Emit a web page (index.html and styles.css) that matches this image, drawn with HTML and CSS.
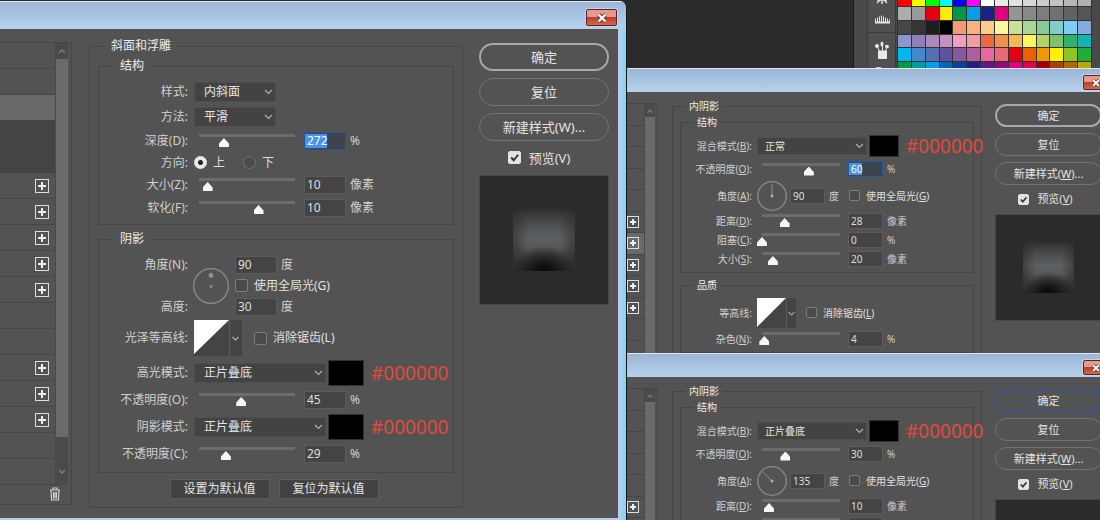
FILE: index.html
```html
<!DOCTYPE html>
<html lang="zh-CN">
<head>
<meta charset="utf-8">
<title>图层样式</title>
<link rel="stylesheet" href="styles.css">
</head>
<body>
<main class="desktop">

  <aside class="dock">
    <div class="dock-strip"></div>
    <div class="dock-icons">
      <svg class="dock-icon" width="27" height="69" viewBox="0 0 27 69" aria-hidden="true">
        <path d="M14 -4V4M9 3l3-3M19 3l-3-3M9 0h10" stroke="#ddd" stroke-width="1.500" fill="none"/>
        <path d="M7 23.500v-5h1v3h1v-4h1v4h1v-5h1v5h1v-6h1v6h1v-5h1v5h1v-4h1v4h1v-3h1v3h1v-2h1v4z" fill="#e4e4e4"/>
        <path d="M0 32.500h27" stroke="#3c3c3c"/>
        <path d="M10.500 51h8v7.500h-8zM11.500 51l-2-4M14.500 51v-5M17.500 51l1.500-4" fill="#e8e8e8" stroke="#e8e8e8"/>
        <ellipse cx="9" cy="46" rx="2" ry="2" fill="#e8e8e8"/>
        <ellipse cx="14" cy="44" rx="1.500" ry="2.500" fill="#e8e8e8"/>
        <ellipse cx="19" cy="46.500" rx="2" ry="1.800" fill="#e8e8e8"/>
        <path d="M8 67h5v2H8z" fill="#ccc"/>
      </svg>
    </div>
    <div class="swatches" id="swatches"></div>
  </aside>

  <section class="dialog dialog-main" aria-label="图层样式">
    <header class="titlebar">
      <button class="close" aria-label="关闭"><svg viewBox="0 0 12 10" width="12" height="10"><path d="M2.500 1.500l7 7M9.500 1.500l-7 7" stroke="#5a3538" stroke-width="4"/><path d="M2.500 1.500l7 7M9.500 1.500l-7 7" stroke="#fff" stroke-width="2.400"/></svg></button>
    </header>
    <div class="client">
      <nav class="effects">
        <div class="effects-body">
          <ul class="effect-list">
            <li></li><li></li><li class="selected"></li><li class="sub"></li><li class="sub"></li>
            <li><button class="plus" aria-label="添加"></button></li>
            <li><button class="plus" aria-label="添加"></button></li>
            <li><button class="plus" aria-label="添加"></button></li>
            <li><button class="plus" aria-label="添加"></button></li>
            <li><button class="plus" aria-label="添加"></button></li>
            <li></li><li></li>
            <li><button class="plus" aria-label="添加"></button></li>
            <li><button class="plus" aria-label="添加"></button></li>
            <li><button class="plus" aria-label="添加"></button></li>
            <li></li><li></li>
          </ul>
          <div class="scroll">
            <svg width="12" height="16" viewBox="0 0 12 16"><path d="M3 10l3-3 3 3" fill="none" stroke="#808080" stroke-width="1.300"/></svg>
            <span class="thumb"></span>
            <svg width="12" height="48" viewBox="0 0 12 48"><path d="M3 33l3 3 3-3" fill="none" stroke="#808080" stroke-width="1.300"/></svg>
          </div>
        </div>
        <button class="trash" aria-label="删除"><svg width="12" height="14" viewBox="0 0 12 14" fill="none" stroke="#d0d0d0" stroke-width="1.200"><path d="M1 3h10M4 3V1h4v2M2 3.500l.6 9.500h6.800l.6-9.500M4.500 5v6.500M6 5v6.500M7.500 5v6.500"/></svg></button>
      </nav>

      <fieldset class="group group-outer">
        <legend>斜面和浮雕</legend>
        <fieldset class="group">
          <legend>结构</legend>
          <div class="row row-select">
            <label class="name" for="a1">样式:</label>
            <select id="a1" class="short"><option>内斜面</option></select>
          </div>
          <div class="row row-select">
            <label class="name" for="a2">方法:</label>
            <select id="a2" class="short"><option>平滑</option></select>
          </div>
          <div class="row">
            <label class="name" for="a3">深度(D):</label>
            <input type="range" value="26" aria-label="深度">
            <input type="text" id="a3" class="picked" value="272"><span class="unit">%</span>
          </div>
          <div class="row row-radio">
            <span class="name">方向:</span>
            <label class="radio"><input type="radio" name="dir" checked>上</label>
            <label class="radio"><input type="radio" name="dir">下</label>
          </div>
          <div class="row">
            <label class="name" for="a4">大小(Z):</label>
            <input type="range" value="9" aria-label="大小">
            <input type="text" id="a4" value="10"><span class="unit">像素</span>
          </div>
          <div class="row">
            <label class="name" for="a5">软化(F):</label>
            <input type="range" value="62" aria-label="软化">
            <input type="text" id="a5" value="10"><span class="unit">像素</span>
          </div>
        </fieldset>
        <fieldset class="group">
          <legend>阴影</legend>
          <div class="light">
            <label class="name" for="b1">角度(N):</label>
            <svg class="dial" viewBox="0 0 36 36"><circle cx="18" cy="18" r="17.300" fill="none" stroke="#8c8c8c" stroke-width="1.300"/><circle cx="18" cy="7.500" r="2.400" fill="#929292"/><circle cx="18" cy="18.500" r="1.400" fill="#929292"/></svg>
            <div class="cell"><input type="text" id="b1" value="90"><span class="unit">度</span></div>
            <label class="check cell"><input type="checkbox"><span>使用全局光(G)</span></label>
            <label class="name last" for="b2">高度:</label>
            <div class="cell"><input type="text" id="b2" value="30"><span class="unit">度</span></div>
          </div>
          <div class="row row-contour">
            <span class="name">光泽等高线:</span>
            <button class="contour" aria-label="光泽等高线"><svg viewBox="0 0 48 36"><path d="M0 0h48v36H0z" fill="#444"/><path d="M0 0h35L0 34z" fill="#fff"/><path d="M35.500 0v36" stroke="#5c5c5c"/><path d="M38.500 17l3 3 3-3" fill="none" stroke="#b0b0b0" stroke-width="1.200"/></svg></button>
            <label class="check"><input type="checkbox"><span>消除锯齿(L)</span></label>
          </div>
          <div class="row row-wide">
            <label class="name" for="b3">高光模式:</label>
            <select id="b3"><option>正片叠底</option></select>
            <button class="color" aria-label="高光颜色"></button><span class="hex">#000000</span>
          </div>
          <div class="row row-wide">
            <label class="name" for="b4">不透明度(O):</label>
            <input type="range" value="44" aria-label="高光不透明度">
            <input type="text" id="b4" value="45"><span class="unit">%</span>
          </div>
          <div class="row row-wide">
            <label class="name" for="b5">阴影模式:</label>
            <select id="b5"><option>正片叠底</option></select>
            <button class="color" aria-label="阴影颜色"></button><span class="hex">#000000</span>
          </div>
          <div class="row row-wide">
            <label class="name" for="b6">不透明度(C):</label>
            <input type="range" value="28" aria-label="阴影不透明度">
            <input type="text" id="b6" value="29"><span class="unit">%</span>
          </div>
        </fieldset>
        <div class="defaults"><button>设置为默认值</button><button>复位为默认值</button></div>
      </fieldset>

      <div class="actions">
        <button class="pill primary">确定</button>
        <button class="pill">复位</button>
        <button class="pill">新建样式(W)...</button>
        <label class="check preview-toggle"><input type="checkbox" checked><span>预览(V)</span></label>
        <div class="preview"><span class="sample"></span></div>
      </div>
    </div>
  </section>

  <section class="dialog dialog-side dialog-upper" aria-label="内阴影">
    <header class="titlebar">
      <button class="close" aria-label="关闭"><svg viewBox="0 0 12 10" width="10" height="8"><path d="M2.500 1.500l7 7M9.500 1.500l-7 7" stroke="#5a3538" stroke-width="4"/><path d="M2.500 1.500l7 7M9.500 1.500l-7 7" stroke="#fff" stroke-width="2.400"/></svg></button>
    </header>
    <div class="client">
      <nav class="effects">
        <div class="effects-body">
          <ul class="effect-list">
            <li></li><li></li><li></li><li></li><li></li>
            <li><button class="plus" aria-label="添加"></button></li>
            <li class="selected"><button class="plus" aria-label="添加"></button></li>
            <li><button class="plus" aria-label="添加"></button></li>
            <li><button class="plus" aria-label="添加"></button></li>
            <li><button class="plus" aria-label="添加"></button></li>
            <li></li><li></li><li></li><li></li><li></li><li></li>
          </ul>
          <div class="scroll">
            <svg width="10" height="13" viewBox="0 0 10 13"><path d="M2.500 8.500L5 6l2.500 2.500" fill="none" stroke="#808080" stroke-width="1.200"/></svg>
            <span class="thumb"></span>
          </div>
        </div>
      </nav>
      <fieldset class="group group-outer">
        <legend>内阴影</legend>
        <fieldset class="group">
          <legend>结构</legend>
          <div class="row row-select">
            <label class="name" for="c1">混合模式(<u>B</u>):</label>
            <select id="c1"><option>正常</option></select>
            <button class="color" aria-label="颜色"></button><span class="hex">#000000</span>
          </div>
          <div class="row row-opacity">
            <label class="name" for="c2">不透明度(<u>O</u>):</label>
            <input type="range" value="60" aria-label="不透明度">
            <input type="text" id="c2" class="picked" value="60"><span class="unit">%</span>
          </div>
          <div class="row row-angle">
            <label class="name" for="c3">角度(<u>A</u>):</label>
            <svg class="dial" viewBox="0 0 30 30"><circle cx="15" cy="15" r="14.300" fill="none" stroke="#8c8c8c" stroke-width="1.300"/><path d="M15 3v12" stroke="#8c8c8c"/><circle cx="15" cy="15" r="1.500" fill="#b0b0b0"/></svg>
            <input type="text" id="c3" value="90"><span class="unit">度</span>
            <label class="check"><input type="checkbox"><span>使用全局光(<u>G</u>)</span></label>
          </div>
          <div class="row">
            <label class="name" for="c4">距离(<u>D</u>):</label>
            <input type="range" value="29" aria-label="距离">
            <input type="text" id="c4" value="28"><span class="unit">像素</span>
          </div>
          <div class="row">
            <label class="name" for="c5">阻塞(<u>C</u>):</label>
            <input type="range" value="0" aria-label="阻塞">
            <input type="text" id="c5" value="0"><span class="unit">%</span>
          </div>
          <div class="row">
            <label class="name" for="c6">大小(<u>S</u>):</label>
            <input type="range" value="14" aria-label="大小">
            <input type="text" id="c6" value="20"><span class="unit">像素</span>
          </div>
        </fieldset>
        <fieldset class="group">
          <legend>品质</legend>
          <div class="row row-contour">
            <span class="name">等高线:</span>
            <button class="contour" aria-label="等高线"><svg viewBox="0 0 39 30"><path d="M0 0h39v30H0z" fill="#444"/><path d="M0 0h29L0 29z" fill="#fff"/><path d="M29.500 0v30" stroke="#5c5c5c"/><path d="M31.500 14l3 3 3-3" fill="none" stroke="#a0a0a0" stroke-width="1.200"/></svg></button>
            <label class="check"><input type="checkbox"><span>消除锯齿(<u>L</u>)</span></label>
          </div>
          <div class="row">
            <label class="name" for="c7">杂色(<u>N</u>):</label>
            <input type="range" value="3" aria-label="杂色">
            <input type="text" id="c7" value="4"><span class="unit">%</span>
          </div>
        </fieldset>
      </fieldset>
      <div class="actions">
        <button class="pill primary">确定</button>
        <button class="pill">复位</button>
        <button class="pill">新建样式(<u>W</u>)...</button>
        <label class="check preview-toggle"><input type="checkbox" checked><span>预览(<u>V</u>)</span></label>
        <div class="preview"><span class="sample"></span></div>
      </div>
    </div>
  </section>

  <section class="dialog dialog-side dialog-lower" aria-label="内阴影">
    <header class="titlebar">
      <button class="close" aria-label="关闭"><svg viewBox="0 0 12 10" width="10" height="8"><path d="M2.500 1.500l7 7M9.500 1.500l-7 7" stroke="#5a3538" stroke-width="4"/><path d="M2.500 1.500l7 7M9.500 1.500l-7 7" stroke="#fff" stroke-width="2.400"/></svg></button>
    </header>
    <div class="client">
      <nav class="effects">
        <div class="effects-body">
          <ul class="effect-list">
            <li></li><li></li><li></li><li></li><li></li>
            <li><button class="plus" aria-label="添加"></button></li>
            <li></li><li></li><li></li><li></li><li></li><li></li><li></li><li></li><li></li><li></li>
          </ul>
          <div class="scroll">
            <svg width="10" height="13" viewBox="0 0 10 13"><path d="M2.500 8.500L5 6l2.500 2.500" fill="none" stroke="#808080" stroke-width="1.200"/></svg>
            <span class="thumb"></span>
          </div>
        </div>
      </nav>
      <fieldset class="group group-outer">
        <legend>内阴影</legend>
        <fieldset class="group">
          <legend>结构</legend>
          <div class="row row-select">
            <label class="name" for="d1">混合模式(<u>B</u>):</label>
            <select id="d1"><option>正片叠底</option></select>
            <button class="color" aria-label="颜色"></button><span class="hex">#000000</span>
          </div>
          <div class="row row-opacity">
            <label class="name" for="d2">不透明度(<u>O</u>):</label>
            <input type="range" value="30" aria-label="不透明度">
            <input type="text" id="d2" value="30"><span class="unit">%</span>
          </div>
          <div class="row row-angle">
            <label class="name" for="d3">角度(<u>A</u>):</label>
            <svg class="dial" viewBox="0 0 30 30"><circle cx="15" cy="15" r="14.300" fill="none" stroke="#8c8c8c" stroke-width="1.300"/><path d="M6 6l9 9" stroke="#8c8c8c"/><circle cx="15" cy="15" r="1.500" fill="#b0b0b0"/></svg>
            <input type="text" id="d3" value="135"><span class="unit">度</span>
            <label class="check"><input type="checkbox"><span>使用全局光(<u>G</u>)</span></label>
          </div>
          <div class="row">
            <label class="name" for="d4">距离(<u>D</u>):</label>
            <input type="range" value="9" aria-label="距离">
            <input type="text" id="d4" value="10"><span class="unit">像素</span>
          </div>
          <div class="row">
            <label class="name" for="d5">阻塞(<u>C</u>):</label>
            <input type="range" value="0" aria-label="阻塞">
            <input type="text" id="d5" value="0"><span class="unit">%</span>
          </div>
        </fieldset>
      </fieldset>
      <div class="actions">
        <button class="pill focused">确定</button>
        <button class="pill">复位</button>
        <button class="pill">新建样式(<u>W</u>)...</button>
        <label class="check preview-toggle"><input type="checkbox" checked><span>预览(<u>V</u>)</span></label>
        <div class="preview"></div>
      </div>
    </div>
  </section>
</main>
<script src="swatches.js"></script>
</body>
</html>
```
FILE: swatches.js
```js
const palette = [
  "ff0000 ffff00 00ff00 00ffff 0000ff ff00ff ffffff ebebeb e1e1e1 d7d7d7 cccccc c2c2c2 b7b7b7 b0b0b0",
  "acacac 9a9a9a e60012 ffee00 009944 00a0e9 1d2088 e4007f 959595 898989 7d7d7d 707070 626262 555555",
  "464646 363636 1f1f1f 000000 f29b76 f6b37f facd89 fff799 cce198 acd598 89c997 84ccc9 7ecef4 88abda",
  "8c97cb 8f82bc aa89bd c490bf f19ec2 f29c9f eb6941 f19149 f8b551 fff45c b3d465 80c269 32b16c 13b5b1",
  "00b7ee 448aca 556fb5 5f52a0 8957a1 ae5da1 ea68a2 eb6877 e60012 eb6100 f39800 fff100 8fc31f 22ac38",
  "009944 009e96 00a0e9 0068b7 00479d 1d2088 601986 920783 e4007f e5004f a40000 a84200 ac6a00 b7aa00"
];
const host = document.getElementById("swatches");
palette.join(" ").split(" ").forEach(function (hex) {
  const chip = document.createElement("span");
  chip.className = "chip";
  chip.style.background = "#" + hex;
  host.appendChild(chip);
});
```
FILE: styles.css
```css
* { box-sizing: border-box; }
body { margin: 0; background: #2b2b2b; }
button, input, select { font: inherit; color: inherit; margin: 0; padding: 0; border: 0; border-radius: 0; }
svg { display: block; }
u { text-underline-offset: 1px; }

.desktop { position: relative; height: 100vh; overflow: hidden; font-family: "Noto Sans", "Noto Sans CJK SC", sans-serif; color: #dcdcdc; }

/* panel dock behind the dialogs */
.dock { display: flex; height: 69px; width: 247px; margin-left: auto; border-left: 1px solid #1a1a1a; background: #494949; overflow: hidden; }
.dock-strip { width: 14px; border-right: 1px solid #3a3a3a; }
.dock-icons { width: 28px; background: #505050; border-right: 1px solid #3a3a3a; }
.swatches { flex: 1; display: grid; grid-template-columns: repeat(14, 1fr); gap: 1px; margin: -7px 9px 0 2px; align-content: start; }
.chip { aspect-ratio: 1; outline: 1px solid #333; }

/* dialogs */
.dialog { position: absolute; display: flex; flex-direction: column; font-size: var(--fs); line-height: var(--line); }
.dialog-main {
  --fs: 12px; --line: 16px; --label: 89px; --track: 106px; --field: 42px; --fieldh: 18px; --gap: 4px;
  --box: 13px; --row: 23px; --pad: 8px; --indent: 15px; --btnfs: 13px; --btnh: 28px;
  left: 0; top: 1px; width: 57%; bottom: 0; border-right: 1px solid #151515; border-radius: 0 7px 0 0;
  background: linear-gradient(90deg, #b4cdef calc(100% - 8px), #b4cdef calc(100% - 5px), #8fd3f2 calc(100% - 3px), #8fd3f2);
  padding: 0 8px 2px 0; overflow: hidden;
}
.dialog-side {
  --fs: 10px; --line: 12px; --label: 71px; --track: 88px; --field: 35px; --fieldh: 16px; --gap: 4px;
  --box: 11px; --row: 19px; --pad: 7px; --indent: 12px; --btnfs: 11px; --btnh: 23px;
  left: 57%; right: -15px; background: #a9c3e2; padding-right: 6px;
}
.dialog-upper { top: 68px; height: 285px; overflow: hidden; }
.dialog-lower { top: 353px; height: 285px; overflow: hidden; }

.titlebar { flex: none; display: flex; justify-content: flex-end; border-top: 1px solid #dfe7f0; background: linear-gradient(#9bb6d6, #b7d0ee); }
.dialog-main .titlebar { height: 28px; margin-right: -8px; padding: 7px 9px 0 0; }
.dialog-side .titlebar { height: 24px; padding: 6px 0 0 0; }
.close { display: grid; place-items: center; border: 1px solid #57222b; border-radius: 2px; background: linear-gradient(#e59a8c 0 45%, #bd3f2b 50%, #d06a50); box-shadow: 0 0 0 1px #c3d3e8; }
.dialog-main .close { width: 31px; height: 17px; }
.dialog-side .close { width: 26px; height: 15px; }

.client { flex: 1; min-height: 0; display: flex; align-items: flex-start; background: #535353; }
.dialog-main .client { padding: 9px 9px 0 0; }
.dialog-side .client { padding: 8px 7px 0 0; }

/* effect list */
.effects { flex: none; border: 1px solid #454545; border-left: 0; }
.dialog-main .effects { width: 72px; margin: 4px 17px 0 0; }
.dialog-side .effects { width: 31px; margin: 3px 14px 0 0; }
.effects-body { display: flex; }
.effect-list { flex: 1; margin: 0; padding: 0; list-style: none; display: grid; grid-auto-rows: 1fr; border-right: 1px solid #4a4a4a; }
.dialog-main .effect-list { height: 442px; }
.dialog-side .effect-list { height: 344px; }
.effect-list li { display: flex; align-items: center; justify-content: flex-end; border-bottom: 1px solid #464646; }
.dialog-main li { padding-right: 6px; }
.dialog-side li { padding-right: 5px; }
.effect-list .selected { background: #696969; }
.effect-list .sub { background: #444; border-color: #444; }
.plus { width: 14px; height: 14px; border: 1px solid #dedede; background: linear-gradient(#eee, #eee) center / 8px 2px no-repeat, linear-gradient(#eee, #eee) center / 2px 8px no-repeat; }
.dialog-side .plus { width: 12px; height: 12px; background-size: 6px 2px, 2px 6px; }
.scroll { display: flex; flex-direction: column; background: #4a4a4a; }
.dialog-main .scroll { margin-right: 3px; }
.dialog-side .scroll { margin-right: 2px; }
.thumb { flex: 1; background: #6a6a6a; }
.trash { display: block; margin: 2px 10px 3px auto; background: none; }

/* option groups */
.group { min-width: 0; margin: 0; padding: 5px 0; border: 1px solid #454545; }
.group + .group { margin-top: 6px; }
.group legend { margin-left: var(--indent); padding: 0 6px; color: #ececec; }
.dialog-side .group { padding-bottom: 4px; }
.dialog-side .group legend { padding: 0 4px; }
.group-outer { flex: 1; padding: 4px var(--pad) 8px; }
.dialog-side .group-outer { padding: 4px var(--pad) 8px; }
.dialog .group-outer > legend { margin-left: calc(var(--indent) - var(--pad)); }

.row { display: flex; align-items: center; height: var(--row); white-space: nowrap; }
.name { flex: none; width: var(--label); margin-right: 6px; text-align: right; color: #cfcfcf; }
.dialog-side .name { margin-right: 5px; }
.row-select { height: 25px; }
.row-radio { height: 21px; }
.row-wide { height: 27px; }
.row-contour { height: 42px; }
.dialog-side .row-select { height: 25px; }
.dialog-side .row-opacity { height: 22px; }
.dialog-side .row-angle { height: 31px; }
.dialog-side .row-contour { height: 33px; }

select { appearance: none; flex: none; width: 132px; height: 20px; padding-left: 9px; color: #e6e6e6; border: 1px solid #4e4e4e;
  background: #434343 url("data:image/svg+xml,%3Csvg xmlns='http://www.w3.org/2000/svg' width='9' height='6'%3E%3Cpath d='M1 1l3.500 3.500L8 1' fill='none' stroke='%23b0b0b0' stroke-width='1.200'/%3E%3C/svg%3E") right 2px center no-repeat; }
select.short { width: 82px; }
.dialog-side select { width: 110px; height: 18px; padding-left: 7px; }

input[type="text"] { flex: none; width: var(--field); height: var(--fieldh); padding-left: 2px; background: #444; border: 1px solid #5b5b5b; color: #dedede; }
.picked[type="text"] { border-color: #24589c; color: #fff; background: linear-gradient(#4a94e6, #4a94e6) 0 1px / 22px 14px no-repeat #3c444e; }
.dialog-side .picked { background-size: 13px 12px; }
.unit { margin-left: var(--gap); color: #cfcfcf; }

input[type="range"] { appearance: none; flex: none; width: var(--track); height: 13px; margin-right: 4px; background: linear-gradient(#6c6c6c, #6c6c6c) center 0 / calc(100% - 10px) 3px no-repeat; }
.dialog-side input[type="range"] { margin-right: 3px; }
input[type="range"]::-webkit-slider-thumb { appearance: none; width: 10px; height: 9px; margin-top: 4px; background: #f6f6f6; clip-path: polygon(50% 0, 100% 60%, 100% 100%, 0 100%, 0 60%); }

input[type="radio"] { appearance: none; width: 13px; height: 13px; margin-right: 6px; border: 1px solid #737373; border-radius: 50%; background: #4c4c4c; }
input[type="radio"]:checked { border-color: #eee; background: radial-gradient(circle, #222 0 2px, #e8e8e8 3px); }
.radio { display: flex; align-items: center; width: 49px; }

input[type="checkbox"] { appearance: none; flex: none; width: var(--box); height: var(--box); border: 1px solid #7c7c7c; border-radius: 2px; background: #4a4a4a; }
input[type="checkbox"]:checked { border-color: #e2e2e2;
  background: #e2e2e2 url("data:image/svg+xml,%3Csvg xmlns='http://www.w3.org/2000/svg' viewBox='0 0 10 10'%3E%3Cpath d='M2 5l2.300 2.500L8.300 2.500' fill='none' stroke='%23333' stroke-width='1.800'/%3E%3C/svg%3E") center / 100% no-repeat; }
.check { display: flex; align-items: center; gap: 6px; color: #e0e0e0; }

.light { display: grid; grid-template-columns: var(--label) 36px 1fr; grid-template-rows: repeat(3, 21px); align-items: center; padding-top: 2px; box-sizing: content-box; }
.light .name { margin: 0; }
.light .dial { grid-column: 2; grid-row: 1 / 4; margin-left: 5px; }
.light .cell { grid-column: 3; display: flex; align-items: center; margin-left: 11px; }
.light .last { grid-row: 3; grid-column: 1; }
.dial { flex: none; width: 36px; height: 36px; }
.row-angle .dial { width: 30px; height: 30px; margin-right: 3px; }
.row-angle .check { margin-left: 10px; }

.contour { width: 48px; background: none; }
.row-contour .check { margin-left: 12px; }
.dialog-side .contour { width: 39px; }
.dialog-side .row-contour .check { margin-left: 10px; }
.color { flex: none; width: 36px; height: 26px; margin-left: 2px; background: #000; border: 1px solid #333; }
.dialog-side .color { width: 30px; height: 22px; }
.hex { margin-left: 7px; font-size: 19px; color: #e04a3c; }

.defaults { display: flex; justify-content: center; gap: 9px; margin: 6px 4px 0 0; }
.defaults button { width: 100px; height: 20px; background: #424242; border: 1px solid #5c5c5c; color: #e6e6e6; }

/* right column */
.actions { flex: none; display: flex; flex-direction: column; font-size: var(--btnfs); }
.dialog-main .actions { width: 130px; margin: 5px 0 0 16px; gap: 7px; }
.dialog-side .actions { width: 107px; margin: 4px 0 0 13px; gap: 6px; }
.pill { height: var(--btnh); border: 1px solid #727272; border-radius: 14px; background: none; color: #e4e4e4; }
.pill.primary { border: 2px solid #a8a8a8; }
.pill.focused { border: 2px solid #3d5580; }
.preview-toggle { justify-content: center; gap: 8px; height: 19px; padding-right: 10px; }
.preview { display: grid; place-items: center; aspect-ratio: 1; background: #2b2b2b; border: 1px solid #474747; margin-top: 1px; }
.dialog-side .preview-toggle { height: 16px; padding-right: 6px; }
.sample { width: 49%; aspect-ratio: 1; background:
  radial-gradient(ellipse 50% 38% at 50% 98%, #0c0c0c 10%, rgba(12, 12, 12, 0) 100%),
  linear-gradient(90deg, rgba(43, 43, 43, .6), rgba(43, 43, 43, 0) 25%, rgba(43, 43, 43, 0) 75%, rgba(43, 43, 43, .6)),
  linear-gradient(#303031, #47484a 20%, #5d6062 45%, #58595b 60%, #3f4041 80%, #2f2f2f); }
```
